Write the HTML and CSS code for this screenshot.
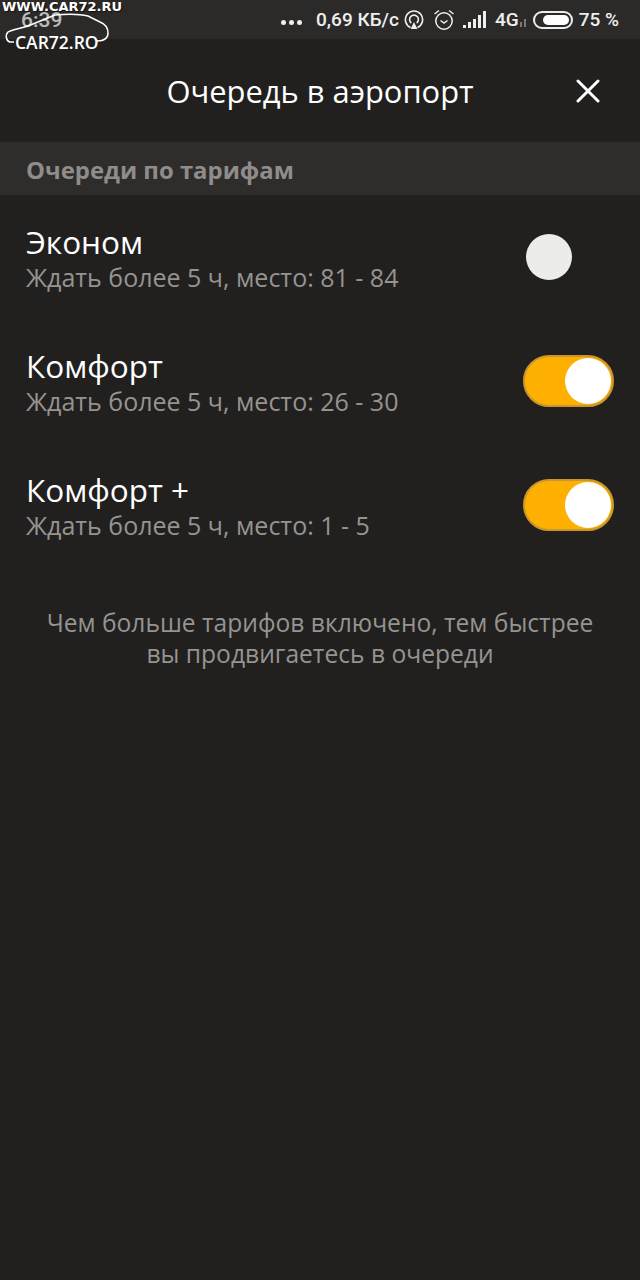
FILE: index.html
```html
<!DOCTYPE html>
<html lang="ru">
<head>
  <meta charset="UTF-8" />
  <title>Очередь в аэропорт</title>
  <link rel="stylesheet" href="styles.css">
</head>
<body>
  <div class="status-bar">
    <span class="status-time">6:39</span>
    <div class="status-right">
      <span class="dots"><i></i><i></i><i></i></span>
      <span class="speed">0,69 КБ/с</span>
      <svg class="ic hotspot" width="20" height="20" viewBox="0 0 20 20" fill="none" stroke="#eee" stroke-width="1.6">
        <path d="M6.5 17.5a8.6 8.6 0 1 1 7 0"/>
        <path d="M7.3 13a4.4 4.4 0 1 1 5.4 0"/>
        <path d="M10 12l3.4 7H6.6z" fill="#eee" stroke="none"/>
      </svg>
      <svg class="ic alarm" width="22" height="22" viewBox="0 0 22 22" fill="none" stroke="#eee" stroke-width="1.5">
        <circle cx="11" cy="12" r="8.2"/>
        <path d="M7.5 11.5l3.5 2.5 3.5-2.5"/>
        <path d="M1.5 5l4.5-3.5M20.5 5L16 1.5"/>
      </svg>
      <svg class="ic signal" width="24" height="20" viewBox="0 0 24 20" fill="#eee">
        <rect x="0" y="15" width="3" height="3"/>
        <rect x="5" y="12" width="3" height="6"/>
        <rect x="10" y="9" width="3" height="9"/>
        <rect x="15" y="5" width="3" height="13"/>
        <rect x="20" y="1" width="3" height="17"/>
      </svg>
      <span class="net">4G</span>
      <svg class="ic arrows" width="6" height="8" viewBox="0 0 6 8" fill="#777">
        <rect x="0" y="3" width="2" height="5"/>
        <rect x="4" y="0" width="2" height="8"/>
      </svg>
      <span class="battery"><span class="battery-fill"></span></span>
      <span class="percent">75 %</span>
    </div>
  </div>

  <div class="watermark">
    <span class="wm-top">WWW.CAR72.RU</span>
    <svg class="wm-car" width="110" height="36" viewBox="0 0 110 36" fill="none" stroke="#fff" stroke-width="1.5">
      <path d="M14 31H10C6 30 5 24 8 21c4-3 17-4 25-8L55 4c10-1 25-1 33 1l12 6c5 2 8 6 8 11 0 5-3 8-11 8"/>
    </svg>
    <span class="wm-bottom">CAR72.RO</span>
  </div>

  <header class="title-bar">
    <h1>Очередь в аэропорт</h1>
    <svg class="close" width="24" height="24" viewBox="0 0 24 24" stroke="#fff" stroke-width="3" stroke-linecap="round">
      <path d="M2 2l20 20M22 2L2 22"/>
    </svg>
  </header>

  <div class="section-head">Очереди по тарифам</div>

  <div class="tariffs">
    <div class="tariff">
      <div class="tariff-text">
        <div class="tariff-name">Эконом</div>
        <div class="tariff-info">Ждать более 5 ч, место: 81 - 84</div>
      </div>
      <span class="toggle off"><span class="knob"></span></span>
    </div>
    <div class="tariff">
      <div class="tariff-text">
        <div class="tariff-name">Комфорт</div>
        <div class="tariff-info">Ждать более 5 ч, место: 26 - 30</div>
      </div>
      <span class="toggle"><span class="knob"></span></span>
    </div>
    <div class="tariff">
      <div class="tariff-text">
        <div class="tariff-name">Комфорт +</div>
        <div class="tariff-info">Ждать более 5 ч, место: 1 - 5</div>
      </div>
      <span class="toggle"><span class="knob"></span></span>
    </div>
  </div>

  <p class="hint">Чем больше тарифов включено, тем быстрее<br>вы продвигаетесь в очереди</p>
</body>
</html>
```

FILE: styles.css
```css
* {
  box-sizing: border-box;
}

body {
  margin: 0;
  height: 1280px;
  overflow: hidden;
  position: relative;
  background: #21201f;
  font-family: "Open Sans", sans-serif;
  color: #fff;
}

.status-bar {
  height: 39px;
  background: #2b2a29;
  display: flex;
  align-items: center;
  justify-content: space-between;
  padding: 0 21px;
  font-family: Roboto, sans-serif;
  font-weight: 500;
  font-size: 19px;
  color: #eee;
}

.status-time {
  color: #bbb;
  font-size: 21px;
}

.status-right {
  display: flex;
  align-items: center;
}

.dots {
  display: flex;
  gap: 3px;
  margin-right: 14px;
  margin-top: 6px;
}

.dots i {
  width: 5px;
  height: 5px;
  border-radius: 50%;
  background: #eee;
}

.ic {
  display: block;
}

.hotspot {
  margin-left: 5px;
}

.alarm {
  margin-left: 9px;
}

.signal {
  margin-left: 8px;
}

.net {
  margin-left: 8px;
}

.arrows {
  margin: 7px 7px 0 1px;
}

.battery {
  width: 40px;
  height: 18px;
  border: 2px solid #eee;
  border-radius: 9px;
  padding: 2px;
  margin-right: 6px;
  display: flex;
}

.battery-fill {
  width: 26px;
  background: #fff;
  border-radius: 5px;
  margin-left: 6px;
}

.watermark {
  position: absolute;
  left: 0;
  top: 0;
  width: 130px;
  height: 50px;
  font-family: "DejaVu Sans", sans-serif;
  font-weight: 700;
  color: #fff;
}

.wm-top {
  position: absolute;
  left: 2px;
  top: -1px;
  font-size: 13px;
  white-space: nowrap;
  text-shadow: 1px 1px 1px #111;
}

.wm-car {
  position: absolute;
  left: 0;
  top: 11px;
}

.wm-bottom {
  position: absolute;
  left: 15px;
  top: 30px;
  font-family: "Open Sans", sans-serif;
  font-size: 17.5px;
  font-weight: 600;
  white-space: nowrap;
}

.title-bar {
  height: 103px;
  display: flex;
  align-items: center;
  justify-content: center;
  position: relative;
}

.title-bar h1 {
  margin: 0;
  font-size: 30.9px;
  font-weight: 400;
}

.close {
  position: absolute;
  right: 40px;
  top: 40px;
}

.section-head {
  height: 53px;
  background: #2e2d2c;
  display: flex;
  align-items: center;
  padding: 2px 0 0 26px;
  font-size: 23.9px;
  font-weight: 700;
  color: #8f8c8a;
}

.tariffs {
  display: flex;
  flex-direction: column;
}

.tariff {
  height: 124px;
  display: flex;
  align-items: center;
  justify-content: space-between;
  padding: 0 26px;
}

.tariff-text {
  padding-top: 3px;
}

.tariff-name {
  font-size: 31.5px;
  line-height: 36px;
}

.tariff-info {
  font-size: 25px;
  line-height: 34px;
  color: #969391;
}

.toggle {
  width: 91px;
  height: 52px;
  border-radius: 26px;
  background: #fdb000;
  border: 2px solid #c8962c;
  display: flex;
  align-items: center;
  justify-content: flex-end;
  padding-right: 1px;
}

.knob {
  width: 46px;
  height: 46px;
  border-radius: 50%;
  background: #fff;
}

.toggle.off {
  background: none;
  border: none;
  justify-content: flex-start;
  padding: 0 0 0 3px;
}

.toggle.off .knob {
  background: #ececea;
}

.hint {
  margin: 40px 0 0;
  text-align: center;
  font-size: 24.6px;
  line-height: 31px;
  color: #969391;
}
```
